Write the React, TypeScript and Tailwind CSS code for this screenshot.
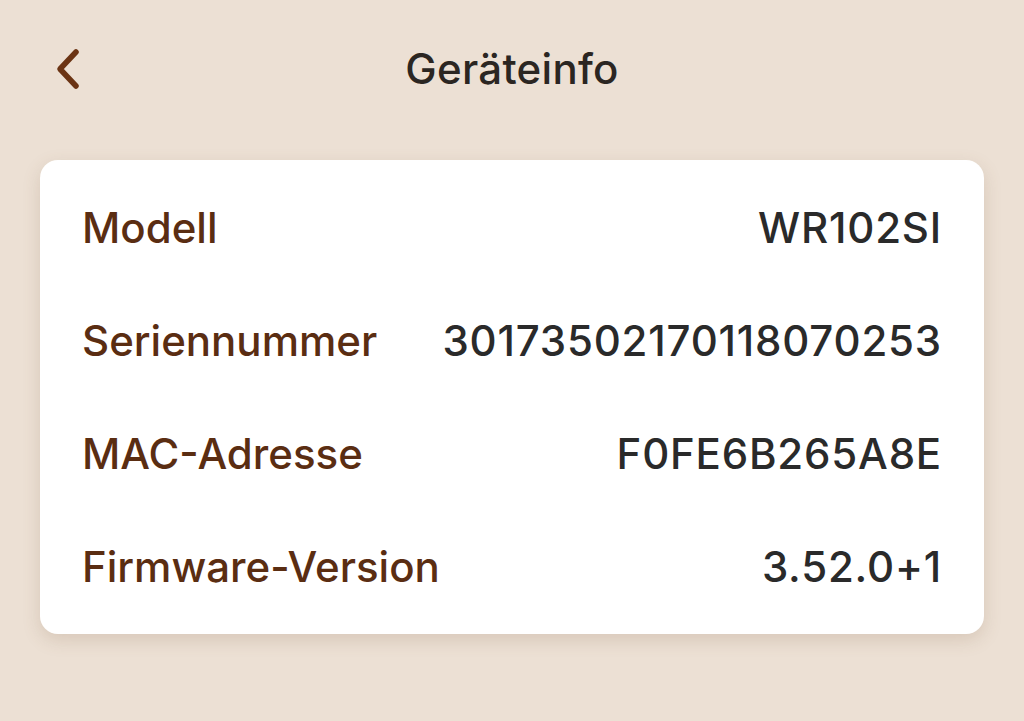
const rows = [
  { label: 'Modell', value: 'WR102SI' },
  { label: 'Seriennummer', value: '30173502170118070253' },
  { label: 'MAC-Adresse', value: 'F0FE6B265A8E' },
  { label: 'Firmware-Version', value: '3.52.0+1' },
]

function BackChevron() {
  return (
    <svg width="28" height="42" viewBox="0 0 28 42" fill="none">
      <path d="M22 4 L6 21 L22 38" stroke="#6b3414" strokeWidth="5.5" strokeLinecap="round" strokeLinejoin="round" />
    </svg>
  )
}

export default function App() {
  return (
    <div className="min-h-[721px] w-full bg-[#ece0d4] font-['Inter','Liberation_Sans',sans-serif]">
      <header className="relative flex h-[136px] items-center justify-center">
        <button className="absolute left-[54px] top-[48px]">
          <BackChevron />
        </button>
        <h1 className="text-[42px] font-medium tracking-[0.3px] text-[#2b2622]">Geräteinfo</h1>
      </header>

      <section className="mx-[40px] mt-[24px] rounded-[18px] bg-white px-[42px] py-[11px] shadow-[0_6px_18px_rgba(120,90,60,0.18)]">
        {rows.map((r) => (
          <div key={r.label} className="flex h-[113px] items-center justify-between">
            <span className="text-[42px] font-medium text-[#5a2d12]">{r.label}</span>
            <span className="text-[42px] font-medium tracking-[0.8px] text-[#2a2a2a]">{r.value}</span>
          </div>
        ))}
      </section>
    </div>
  )
}
